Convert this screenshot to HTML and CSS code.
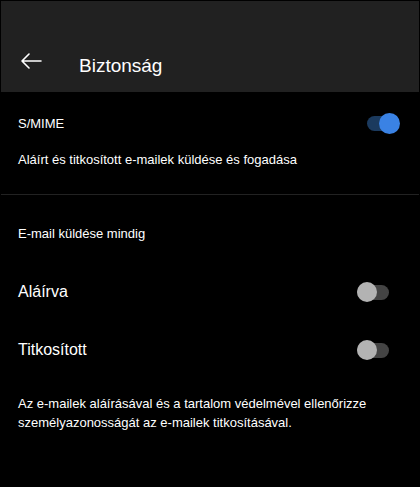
FILE: index.html
```html
<!DOCTYPE html>
<html lang="hu">
<head>
  <meta charset="UTF-8" />
  <meta name="viewport" content="width=device-width, initial-scale=1.0"/>
  <title>Biztonság</title>
  <link rel="stylesheet" href="styles.css">
</head>
<body>
  <div class="screen">
    <header class="topbar">
      <button class="back" aria-label="Vissza">
        <svg width="22" height="16" viewBox="0 0 22 16">
          <path d="M21 8H2M9 1L2 8l7 7" fill="none" stroke="#fff" stroke-width="1.6" stroke-linecap="round" stroke-linejoin="round"/>
        </svg>
      </button>
      <h1>Biztonság</h1>
    </header>

    <section class="block">
      <div class="row">
        <span class="label">S/MIME</span>
        <span class="switch on"><span class="thumb"></span></span>
      </div>
      <p class="desc">Aláírt és titkosított e-mailek küldése és fogadása</p>
    </section>

    <section class="block second">
      <p class="heading">E-mail küldése mindig</p>
      <div class="row big">
        <span class="label">Aláírva</span>
        <span class="switch"><span class="thumb"></span></span>
      </div>
      <div class="row big">
        <span class="label">Titkosított</span>
        <span class="switch"><span class="thumb"></span></span>
      </div>
      <p class="note">Az e-mailek aláírásával és a tartalom védelmével ellenőrizze személyazonosságát az e-mailek titkosításával.</p>
    </section>
  </div>
</body>
</html>
```

FILE: styles.css
```css
html, body {
  margin: 0;
  height: 100%;
  background: #000;
}
body {
  font-family: 'Segoe UI', 'Liberation Sans', Arial, sans-serif;
  color: #fff;
}
.screen {
  box-sizing: border-box;
  height: 487px;
  border: 1px solid #000;
  background: #000;
}
.topbar {
  height: 91px;
  background: #212121;
  display: flex;
  align-items: flex-end;
  padding: 0 0 14px 19px;
  box-sizing: border-box;
}
.back {
  background: none;
  border: none;
  padding: 0;
  width: 22px;
  height: 16px;
  margin-bottom: 9px;
  display: flex;
}
.topbar h1 {
  margin: 0 0 0 37px;
  font-size: 19px;
  font-weight: normal;
  line-height: 24px;
}
.block {
  padding: 0 20px 0 17px;
  border-bottom: 1px solid #222;
}
.second {
  border-bottom: none;
}
.row {
  display: flex;
  align-items: center;
  justify-content: space-between;
  height: 62px;
  font-size: 13px;
}
.row.big {
  height: 58px;
  font-size: 16px;
}
.desc {
  margin: -3px 0 0 0;
  font-size: 13px;
  line-height: 18px;
  padding-bottom: 25px;
}
.heading {
  margin: 0;
  padding-top: 30px;
  padding-bottom: 20px;
  font-size: 13px;
  line-height: 18px;
}
.note {
  margin: 15px 0 0 0;
  font-size: 13px;
  line-height: 19px;
}
.switch {
  position: relative;
  width: 32px;
  height: 15px;
  border-radius: 8px;
  background: #444;
  margin-right: 10px;
}
.switch .thumb {
  position: absolute;
  top: -3px;
  left: 0;
  width: 20px;
  height: 20px;
  border-radius: 50%;
  background: #b3b3b3;
}
.switch.on {
  background: #1b3a5e;
  margin-right: 0;
}
.switch.on .thumb {
  left: auto;
  right: -1px;
  top: -3px;
  width: 21px;
  height: 21px;
  background: #3a82e4;
}
```
